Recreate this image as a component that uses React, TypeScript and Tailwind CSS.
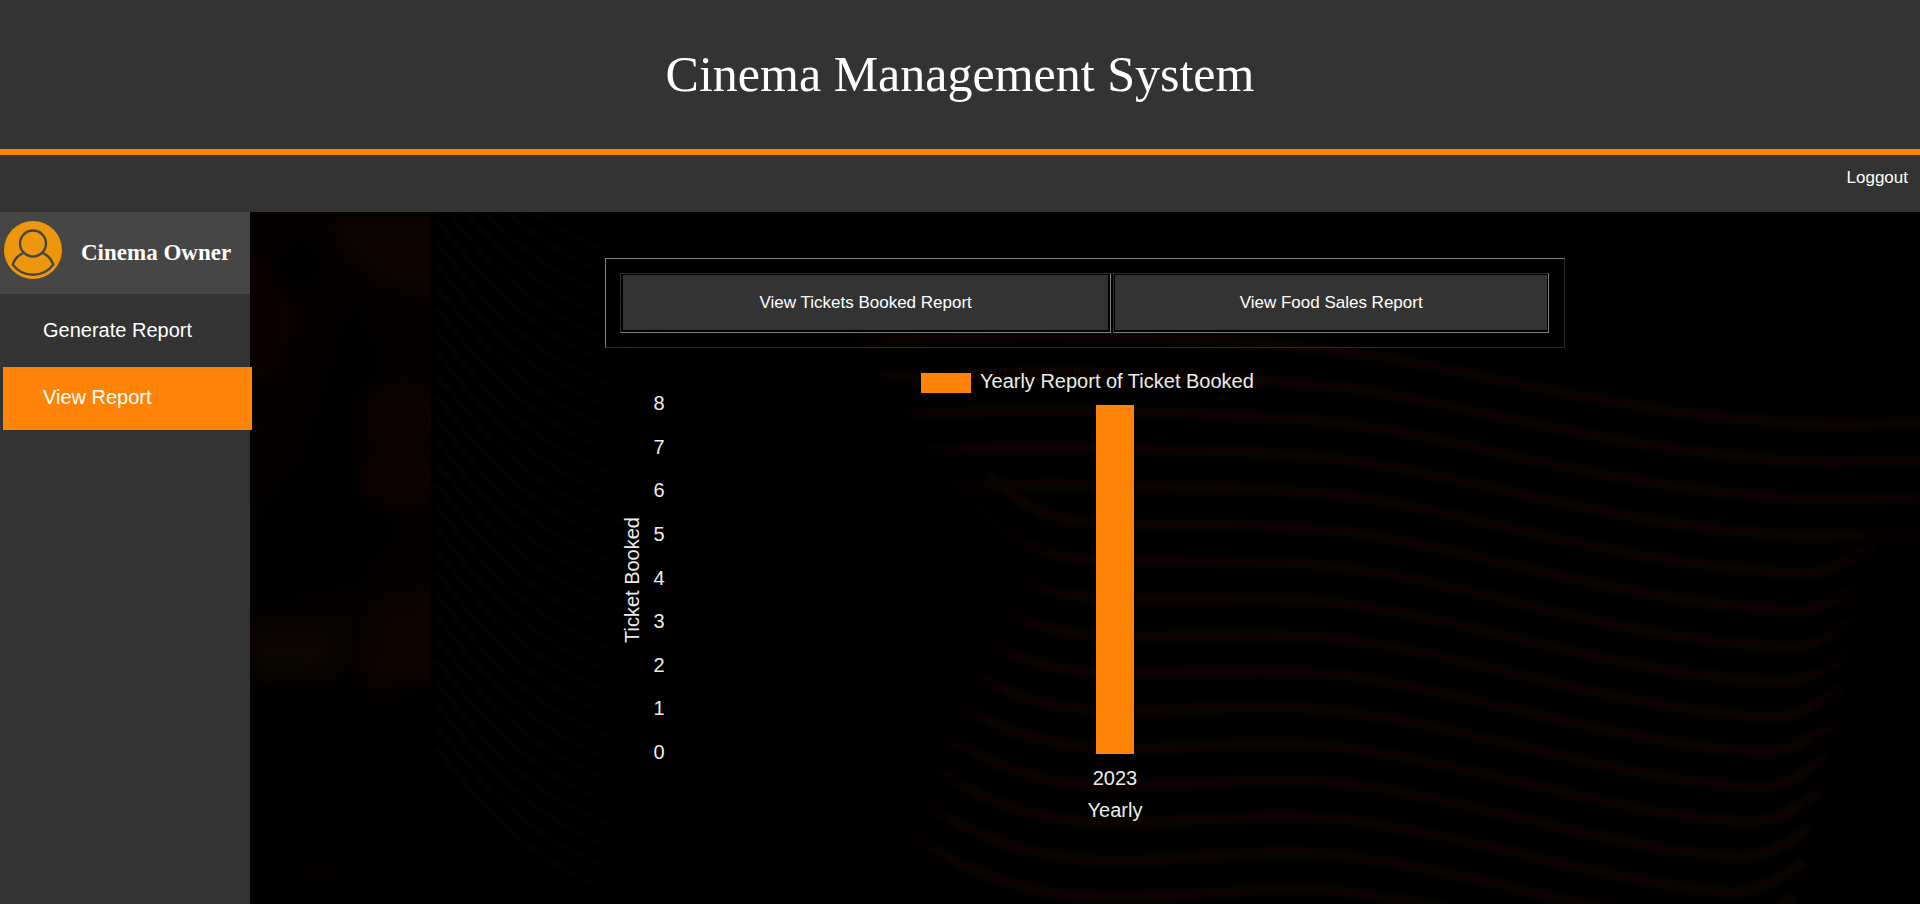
import React from "react";

const SANS = "font-['Liberation_Sans',Arial,sans-serif]";

type BarPoint = { label: string; value: number };

const yearlyTickets: BarPoint[] = [{ label: "2023", value: 8 }];

function Avatar() {
  return (
    <svg viewBox="0 0 58 58" className="size-[58px] shrink-0" aria-hidden="true">
      <circle cx="29" cy="29" r="29" fill="#ec970c" />
      <g fill="none" stroke="#464646" strokeWidth="2.4" strokeLinejoin="round">
        <circle cx="29" cy="22.5" r="13" />
        <path d="M19.5 31.8C14.5 34 10.5 38.2 8.7 43.6C13.5 50 20.5 53.8 29 53.8C37.5 53.8 44.5 50 49.3 43.6C47.5 38.2 43.5 34 38.5 31.8" />
      </g>
    </svg>
  );
}

function wavePath(i: number): string {
  const s = 411 + 37.4 * i;
  const m = 423 + 36 * i;
  const e = 499 + 37 * i - Math.max(0, i - 4) * 2;
  const ex = 1821 - 8 * i;
  const w = 40 + i * 18;
  const h = 20 + i * 10;
  const head =
    i < 3
      ? `M680 ${s + 8} C850 ${s + 6} 1000 ${s - 4} 1110 ${s}`
      : `M${1080 - w} ${s - h} C${1080 - w * 0.6} ${s - h * 0.3} ${1080 - w * 0.3} ${s} 1110 ${s}`;
  const tail = i < 2 ? `L1920 ${e - 2}` : `Q${ex + 30} ${e} ${ex + 70} ${e - 30}`;
  return `${head} C1190 ${s + 2} 1260 ${m - 8} 1340 ${m} C1470 ${m + 15} 1620 ${e - 6} ${ex} ${e} ${tail}`;
}

function Backdrop() {
  const waves = Array.from({ length: 16 }, (_, k) => k - 2);
  const ripples = Array.from({ length: 30 }, (_, k) => k);
  return (
    <svg
      viewBox="250 212 1670 692"
      preserveAspectRatio="xMinYMin slice"
      className="absolute inset-0 h-full w-full"
      aria-hidden="true"
    >
      <defs>
        <filter id="soft" x="-20%" y="-20%" width="140%" height="140%" colorInterpolationFilters="sRGB">
          <feGaussianBlur stdDeviation="9" />
        </filter>
        <filter id="fade" x="-20%" y="-20%" width="140%" height="140%">
          <feGaussianBlur stdDeviation="24" />
        </filter>
        <mask id="wave-area" maskUnits="userSpaceOnUse" x="250" y="212" width="1670" height="692">
          <path
            d="M780 200H2000V500L1850 560L1815 950H880L960 720L1050 570L930 450Z"
            fill="#ffffff"
            filter="url(#fade)"
          />
        </mask>
        <linearGradient id="wave" gradientUnits="userSpaceOnUse" x1="700" y1="0" x2="1920" y2="0">
          <stop offset="0" stopColor="#060200" />
          <stop offset="0.35" stopColor="#0b0301" />
          <stop offset="0.6" stopColor="#080301" />
          <stop offset="0.9" stopColor="#0a0301" />
          <stop offset="1" stopColor="#080200" />
        </linearGradient>
        <linearGradient id="ripple" gradientUnits="userSpaceOnUse" x1="431" y1="0" x2="740" y2="0">
          <stop offset="0" stopColor="#050200" />
          <stop offset="0.5" stopColor="#040200" />
          <stop offset="0.9" stopColor="#000000" />
        </linearGradient>
        <clipPath id="poster">
          <rect x="250" y="212" width="181" height="692" />
        </clipPath>
      </defs>
      <g clipPath="url(#poster)">
        <g filter="url(#soft)">
          <rect x="230" y="190" width="220" height="480" fill="#060200" />
          <path d="M335 222H440V290L390 280L350 250Z" fill="#0d0301" />
          <ellipse cx="258" cy="320" rx="30" ry="60" fill="#0b0000" />
          <ellipse cx="400" cy="418" rx="34" ry="30" fill="#0d0001" />
          <ellipse cx="398" cy="475" rx="34" ry="28" fill="#0d0000" />
          <path d="M372 610L440 590V684L360 690Z" fill="#0c0200" />
          <path d="M250 625L340 620V680L250 682Z" fill="#090400" />
          <ellipse cx="298" cy="262" rx="28" ry="26" fill="#010101" />
          <path d="M350 285L390 370L355 400L360 500L410 520L360 590L250 612L250 520L300 450Z" fill="#010101" />
          <ellipse cx="325" cy="872" rx="20" ry="10" fill="#060000" />
        </g>
      </g>
      <g fill="none" stroke="url(#ripple)" strokeWidth="5">
        {ripples.map((i) => (
          <path
            key={i}
            d={`M436 ${110 + i * 22}C500 ${190 + i * 22} 560 ${262 + i * 22} 740 ${285 + i * 22}`}
          />
        ))}
      </g>
      <g fill="none" stroke="url(#wave)" mask="url(#wave-area)">
        {waves.map((i) => (
          <g key={i}>
            <path d={wavePath(i)} strokeWidth="14" strokeOpacity="0.45" />
            <path d={wavePath(i)} strokeWidth="9" />
          </g>
        ))}
      </g>
    </svg>
  );
}

function BarChart({ data }: { data: BarPoint[] }) {
  const top = 45;
  const bottom = 394;
  const left = 80;
  const right = 940;
  const max = 8;
  const slot = (right - left) / data.length;
  return (
    <svg
      viewBox="0 0 960 480"
      className={`block w-full text-[20px] ${SANS}`}
      fill="#ececec"
      role="img"
      aria-label="Yearly Report of Ticket Booked"
    >
      <rect x="316" y="13" width="50" height="20" fill="#ff8307" />
      <text x="375" y="28">Yearly Report of Ticket Booked</text>
      {Array.from({ length: max + 1 }, (_, tick) => (
        <text key={tick} x="54" y={bottom - (tick * (bottom - top)) / max + 5} textAnchor="middle">
          {tick}
        </text>
      ))}
      <text transform="translate(34 220) rotate(-90)" textAnchor="middle">
        Ticket Booked
      </text>
      {data.map((point, i) => {
        const height = (point.value / max) * (bottom - top);
        const centre = left + slot * (i + 0.5);
        return (
          <g key={point.label}>
            <rect x={centre - 19} y={bottom - height} width="38" height={height} fill="#ff8307" />
            <text x={centre} y="425" textAnchor="middle">
              {point.label}
            </text>
          </g>
        );
      })}
      <text x={(left + right) / 2} y="457" textAnchor="middle">
        Yearly
      </text>
    </svg>
  );
}

function ReportCell({ label, className }: { label: string; className: string }) {
  return (
    <td
      className={`border border-t-[#2c2c2c] border-r-[#808080] border-b-[#808080] border-l-[#2c2c2c] pt-px pb-0.5 ${className}`}
    >
      <button type="button" className="block h-[55px] w-full bg-[#333333] text-center text-[17px] text-white">
        {label}
      </button>
    </td>
  );
}

export default function App() {
  return (
    <div className={`flex min-h-screen flex-col bg-black text-white ${SANS}`}>
      <header className="flex h-[155px] items-center justify-center border-b-[6px] border-[#ff8307] bg-[#333333] pb-0.5">
        <h1 className="font-['Liberation_Serif','Times_New_Roman',serif] text-[50px] leading-none">
          Cinema Management System
        </h1>
      </header>
      <nav className="flex h-[57px] justify-end bg-[#333333] px-3 pt-3">
        <a href="#logout" className="text-[17px] leading-[22px]">
          Loggout
        </a>
      </nav>
      <div className="flex flex-1">
        <aside className="relative z-10 w-[250px] shrink-0 bg-[#333333]">
          <div className="flex h-[82px] items-center gap-[19px] bg-[#464646] px-1 pb-1.5">
            <Avatar />
            <h2 className="pt-1.5 font-['Liberation_Serif','Times_New_Roman',serif] text-[23px] font-bold whitespace-nowrap">
              Cinema Owner
            </h2>
          </div>
          <ul className="flex flex-col gap-1 pt-1.5">
            <li>
              <a href="#generate" className="ml-[3px] flex h-[63px] w-[249px] items-center px-10 pb-1 text-xl">
                Generate Report
              </a>
            </li>
            <li>
              <a
                href="#view"
                aria-current="page"
                className="ml-[3px] flex h-[63px] w-[249px] items-center bg-[#ff8307] px-10 pb-1 text-xl"
              >
                View Report
              </a>
            </li>
          </ul>
        </aside>
        <main className="relative min-w-0 flex-1 overflow-hidden">
          <Backdrop />
          <div className="relative mx-auto w-[960px] max-w-full pt-[46px]">
            <div className="border border-t-[#808080] border-r-[#2c2c2c] border-b-[#2c2c2c] border-l-[#808080] py-3 pr-[13px] pl-3">
              <table className="w-full border-separate border-spacing-0.5">
                <tbody>
                  <tr>
                    <ReportCell label="View Tickets Booked Report" className="w-[53%] px-0.5" />
                    <ReportCell label="View Food Sales Report" className="w-[47%] px-px" />
                  </tr>
                </tbody>
              </table>
            </div>
            <div className="pt-3">
              <BarChart data={yearlyTickets} />
            </div>
          </div>
        </main>
      </div>
    </div>
  );
}
